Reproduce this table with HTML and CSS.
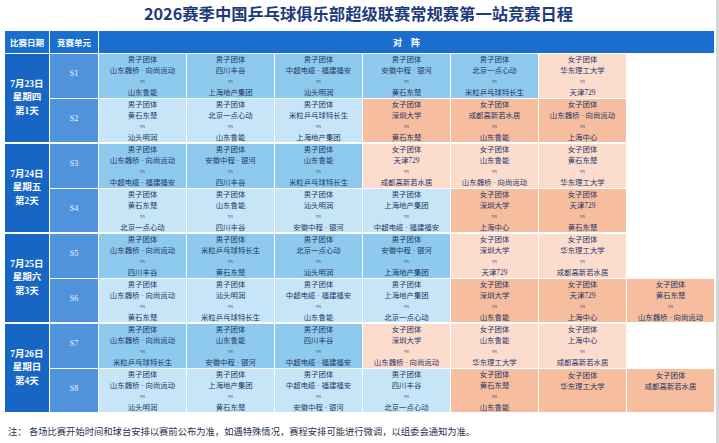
FILE: index.html
```html
<!DOCTYPE html>
<html lang="zh-CN">
<head>
<meta charset="utf-8">
<title>2026赛季中国乒乓球俱乐部超级联赛常规赛第一站竞赛日程</title>
<link rel="stylesheet" href="styles.css">
</head>
<body>
<div class="page">
  <h1 class="title">2026赛季中国乒乓球俱乐部超级联赛常规赛第一站竞赛日程</h1>
  <div class="sched">
    <div class="grid head">
      <div class="hc">比赛日期</div>
      <div class="hc">竞赛单元</div>
      <div class="hc wide">对　阵</div>
    </div>

    <div class="grid day">
      <div class="date"><span>7月23日</span><span>星期四</span><span>第1天</span></div>
      <div class="unit">S1</div>
      <div class="m men a"><span>男子团体</span><span>山东魏桥 · 向尚运动</span><span class="vs">vs</span><span>山东鲁能</span></div>
      <div class="m men a"><span>男子团体</span><span>四川丰谷</span><span class="vs">vs</span><span>上海地产集团</span></div>
      <div class="m men a"><span>男子团体</span><span>中超电缆 · 福建福安</span><span class="vs">vs</span><span>汕头明润</span></div>
      <div class="m men a"><span>男子团体</span><span>安徽中程 · 银河</span><span class="vs">vs</span><span>黄石东楚</span></div>
      <div class="m men a"><span>男子团体</span><span>北京一点心动</span><span class="vs">vs</span><span>米粒乒乓球特长生</span></div>
      <div class="m wom a"><span>女子团体</span><span>华东理工大学</span><span class="vs">vs</span><span>天津729</span></div>
      <div class="m empty"></div>
      <div class="unit">S2</div>
      <div class="m men b"><span>男子团体</span><span>黄石东楚</span><span class="vs">vs</span><span>汕头明润</span></div>
      <div class="m men b"><span>男子团体</span><span>北京一点心动</span><span class="vs">vs</span><span>山东鲁能</span></div>
      <div class="m men b"><span>男子团体</span><span>米粒乒乓球特长生</span><span class="vs">vs</span><span>上海地产集团</span></div>
      <div class="m wom b"><span>女子团体</span><span>深圳大学</span><span class="vs">vs</span><span>黄石东楚</span></div>
      <div class="m wom b"><span>女子团体</span><span>成都高新若水居</span><span class="vs">vs</span><span>山东鲁能</span></div>
      <div class="m wom b"><span>女子团体</span><span>山东魏桥 · 向尚运动</span><span class="vs">vs</span><span>上海中心</span></div>
      <div class="m empty"></div>
    </div>

    <div class="grid day">
      <div class="date"><span>7月24日</span><span>星期五</span><span>第2天</span></div>
      <div class="unit">S3</div>
      <div class="m men a"><span>男子团体</span><span>山东魏桥 · 向尚运动</span><span class="vs">vs</span><span>中超电缆 · 福建福安</span></div>
      <div class="m men a"><span>男子团体</span><span>安徽中程 · 银河</span><span class="vs">vs</span><span>四川丰谷</span></div>
      <div class="m men a"><span>男子团体</span><span>山东鲁能</span><span class="vs">vs</span><span>米粒乒乓球特长生</span></div>
      <div class="m wom a"><span>女子团体</span><span>天津729</span><span class="vs">vs</span><span>成都高新若水居</span></div>
      <div class="m wom a"><span>女子团体</span><span>山东鲁能</span><span class="vs">vs</span><span>山东魏桥 · 向尚运动</span></div>
      <div class="m wom a"><span>女子团体</span><span>黄石东楚</span><span class="vs">vs</span><span>华东理工大学</span></div>
      <div class="m empty"></div>
      <div class="unit">S4</div>
      <div class="m men b"><span>男子团体</span><span>黄石东楚</span><span class="vs">vs</span><span>北京一点心动</span></div>
      <div class="m men b"><span>男子团体</span><span>山东鲁能</span><span class="vs">vs</span><span>四川丰谷</span></div>
      <div class="m men b"><span>男子团体</span><span>汕头明润</span><span class="vs">vs</span><span>安徽中程 · 银河</span></div>
      <div class="m men b"><span>男子团体</span><span>上海地产集团</span><span class="vs">vs</span><span>中超电缆 · 福建福安</span></div>
      <div class="m wom b"><span>女子团体</span><span>深圳大学</span><span class="vs">vs</span><span>上海中心</span></div>
      <div class="m wom b"><span>女子团体</span><span>天津729</span><span class="vs">vs</span><span>黄石东楚</span></div>
      <div class="m empty"></div>
    </div>

    <div class="grid day">
      <div class="date"><span>7月25日</span><span>星期六</span><span>第3天</span></div>
      <div class="unit">S5</div>
      <div class="m men a"><span>男子团体</span><span>山东魏桥 · 向尚运动</span><span class="vs">vs</span><span>四川丰谷</span></div>
      <div class="m men a"><span>男子团体</span><span>米粒乒乓球特长生</span><span class="vs">vs</span><span>黄石东楚</span></div>
      <div class="m men a"><span>男子团体</span><span>北京一点心动</span><span class="vs">vs</span><span>汕头明润</span></div>
      <div class="m men a"><span>男子团体</span><span>安徽中程 · 银河</span><span class="vs">vs</span><span>上海地产集团</span></div>
      <div class="m wom a"><span>女子团体</span><span>深圳大学</span><span class="vs">vs</span><span>天津729</span></div>
      <div class="m wom a"><span>女子团体</span><span>华东理工大学</span><span class="vs">vs</span><span>成都高新若水居</span></div>
      <div class="m empty"></div>
      <div class="unit">S6</div>
      <div class="m men b"><span>男子团体</span><span>山东魏桥 · 向尚运动</span><span class="vs">vs</span><span>黄石东楚</span></div>
      <div class="m men b"><span>男子团体</span><span>汕头明润</span><span class="vs">vs</span><span>米粒乒乓球特长生</span></div>
      <div class="m men b"><span>男子团体</span><span>中超电缆 · 福建福安</span><span class="vs">vs</span><span>山东鲁能</span></div>
      <div class="m men b"><span>男子团体</span><span>上海地产集团</span><span class="vs">vs</span><span>北京一点心动</span></div>
      <div class="m wom b"><span>女子团体</span><span>深圳大学</span><span class="vs">vs</span><span>山东鲁能</span></div>
      <div class="m wom b"><span>女子团体</span><span>天津729</span><span class="vs">vs</span><span>上海中心</span></div>
      <div class="m wom b"><span>女子团体</span><span>黄石东楚</span><span class="vs">vs</span><span>山东魏桥 · 向尚运动</span></div>
    </div>

    <div class="grid day">
      <div class="date"><span>7月26日</span><span>星期日</span><span>第4天</span></div>
      <div class="unit">S7</div>
      <div class="m men a"><span>男子团体</span><span>山东魏桥 · 向尚运动</span><span class="vs">vs</span><span>米粒乒乓球特长生</span></div>
      <div class="m men a"><span>男子团体</span><span>山东鲁能</span><span class="vs">vs</span><span>安徽中程 · 银河</span></div>
      <div class="m men a"><span>男子团体</span><span>四川丰谷</span><span class="vs">vs</span><span>中超电缆 · 福建福安</span></div>
      <div class="m wom a"><span>女子团体</span><span>深圳大学</span><span class="vs">vs</span><span>山东魏桥 · 向尚运动</span></div>
      <div class="m wom a"><span>女子团体</span><span>山东鲁能</span><span class="vs">vs</span><span>华东理工大学</span></div>
      <div class="m wom a"><span>女子团体</span><span>上海中心</span><span class="vs">vs</span><span>成都高新若水居</span></div>
      <div class="m empty"></div>
      <div class="unit">S8</div>
      <div class="m men b"><span>男子团体</span><span>山东魏桥 · 向尚运动</span><span class="vs">vs</span><span>汕头明润</span></div>
      <div class="m men b"><span>男子团体</span><span>上海地产集团</span><span class="vs">vs</span><span>黄石东楚</span></div>
      <div class="m men b"><span>男子团体</span><span>中超电缆 · 福建福安</span><span class="vs">vs</span><span>安徽中程 · 银河</span></div>
      <div class="m men b"><span>男子团体</span><span>四川丰谷</span><span class="vs">vs</span><span>北京一点心动</span></div>
      <div class="m wom b fade1"><span>女子团体</span><span>黄石东楚</span><span class="vs">vs</span><span>山东鲁能</span></div>
      <div class="m wom b fade2 top"><span>女子团体</span><span>华东理工大学</span></div>
      <div class="m wom b fade2 top"><span>女子团体</span><span>成都高新若水居</span></div>
    </div>
  </div>
  <p class="note">注：&nbsp;各场比赛开始时间和球台安排以赛前公布为准，如遇特殊情况，赛程安排可能进行微调，以组委会通知为准。</p>
</div>
</body>
</html>
```

FILE: styles.css
```css
* { box-sizing: border-box; }

html, body {
  margin: 0;
  padding: 0;
  background: #ffffff;
}

body {
  font-family: "Liberation Serif", "Noto Sans CJK SC", serif;
  color: #233d73;
}

.page {
  width: 719px;
  height: 443px;
  overflow: hidden;
  border-right: 3px solid #d6d6d6;
  padding-left: 5px;
  padding-right: 2px;
}

.title {
  margin: 0;
  height: 31px;
  padding-top: 1px;
  line-height: 24px;
  text-align: center;
  font-family: "Noto Sans CJK SC", sans-serif;
  font-weight: 700;
  font-size: 16.3px;
  color: #1d3a7c;
  padding-right: 2px;
}

.sched {
  width: 709px;
  display: flex;
  flex-direction: column;
  gap: 2px;
  background: #ffffff;
}

.grid {
  display: grid;
  grid-template-columns: 44px 48px repeat(7, 1fr);
  column-gap: 1px;
  row-gap: 1px;
}

.head {
  grid-template-rows: 22px;
  margin-bottom: -1px;
}

.hc {
  background: #1a6fce;
  color: #ffffff;
  font-family: "Noto Sans CJK SC", sans-serif;
  font-weight: 700;
  font-size: 8.5px;
  display: flex;
  align-items: center;
  justify-content: center;
}

.hc.wide {
  grid-column: span 7;
  font-size: 9px;
}

.day {
  grid-template-rows: 43.5px 43.5px;
}

.date {
  grid-row: 1 / span 2;
  grid-column: 1;
  background: #1866c3;
  color: #ffffff;
  display: flex;
  flex-direction: column;
  align-items: center;
  justify-content: center;
  font-size: 9.5px;
  line-height: 13.5px;
  font-weight: 700;
}

.unit {
  background: #4f93dc;
  color: #f3f8ff;
  font-size: 8px;
  display: flex;
  align-items: center;
  justify-content: center;
  padding-bottom: 4px;
}

.m {
  display: flex;
  flex-direction: column;
  align-items: center;
  justify-content: center;
  font-size: 7.4px;
  line-height: 11px;
  color: #1e3668;
  white-space: nowrap;
  padding-top: 1px;
}

.m .vs {
  font-size: 5.5px;
  color: #3d5686;
}

.men.a { background: #8ecaed; }
.men.b { background: #c6e6f7; }
.wom.a { background: #fcdccd; }
.wom.b { background: #f6bd9e; }
.empty { background: #ffffff; }

.top {
  justify-content: flex-start;
}

.fade1 {
  background: linear-gradient(160deg, #f6bd9e 0%, #f8d2bd 60%, #fbe6da 100%);
}

.fade2 {
  background: linear-gradient(180deg, #f6c2a6 0%, #f9d9c6 40%, #fdf0e8 75%, #ffffff 100%);
}

.note {
  margin: 14px 0 0 3px;
  font-size: 9.3px;
  line-height: 12px;
  color: #2a3350;
}
```
